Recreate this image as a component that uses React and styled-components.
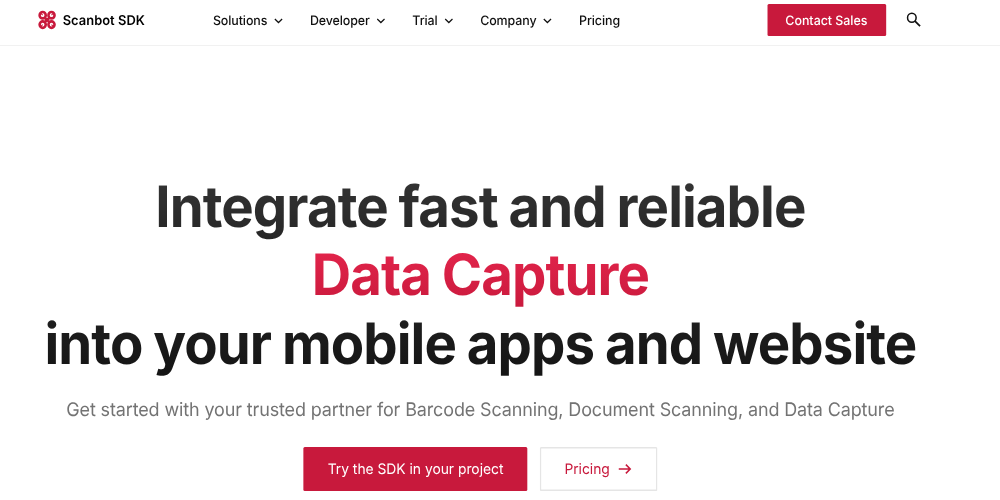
import styled, { createGlobalStyle } from 'styled-components';

const GlobalStyle = createGlobalStyle`
  * {
    box-sizing: border-box;
  }

  body {
    margin: 0;
    background: #fff;
    color: #111;
    font-family: Inter, 'Liberation Sans', sans-serif;
    text-rendering: geometricPrecision;
    overflow: hidden;
  }

  a {
    color: inherit;
    text-decoration: none;
    white-space: nowrap;
  }
`;

// slightly condensed page, everything inside is 1 / 0.957 wider
const Page = styled.div`
  width: 1045px;
  transform: scaleX(0.957);
  transform-origin: 0 0;
`;

const Header = styled.header`
  height: 46px;
  padding: 4px 0 0 39px;
  border-bottom: 1px solid #f1f1f1;
  display: flex;
  align-items: flex-start;
`;

const Brand = styled.a`
  width: 183.5px;
  height: 33px;
  display: flex;
  align-items: center;
  gap: 6.5px;
  font-size: 13.5px;
  font-weight: 600;
  letter-spacing: 0.02px;
  color: #000;

  svg {
    margin-bottom: 1px;
  }
`;

const Nav = styled.nav`
  width: 579px;
  height: 33px;
  display: flex;
  align-items: center;
  gap: 28.2px;
`;

const NavLink = styled.a`
  display: flex;
  align-items: center;
  gap: 6.3px;
  font-size: 13px;
  font-weight: 450;
  letter-spacing: -0.1px;
`;

const Button = styled.a`
  display: flex;
  align-items: center;
  justify-content: center;
  gap: 9px;
  width: ${({ $width }) => $width};
  height: ${({ $small }) => ($small ? '32px' : '44px')};
  padding-top: 1px;
  font-size: ${({ $small }) => ($small ? '13px' : '14.5px')};
  font-weight: ${({ $small }) => ($small ? 500 : 400)};
  letter-spacing: -0.03px;
  color: ${({ $outline }) => ($outline ? '#c8193c' : '#fff')};
  background: ${({ $outline }) => ($outline ? '#fff' : '#c8193c')};
  box-shadow: ${({ $outline }) => ($outline ? 'inset 0 0 0 1.5px #e5e5e5' : 'none')};
  border-radius: 1.5px;
`;

const SearchButton = styled.a`
  height: 32px;
  margin-left: 21px;
  display: flex;
  align-items: center;
`;

const Hero = styled.main`
  width: 1004px;
  padding-top: 127px;
  display: flex;
  flex-direction: column;
  align-items: center;
`;

const Title = styled.h1`
  margin: 0;
  font-size: 57px;
  font-weight: 700;
  line-height: 68.3px;
  letter-spacing: -0.017em;
  word-spacing: -1.2px;
  text-align: center;
  white-space: nowrap;
`;

const TitleLine = styled.span`
  display: block;
  color: transparent;
  background: linear-gradient(${({ $from }) => $from}, ${({ $to }) => $to});
  background-clip: text;
`;

const Lead = styled.p`
  margin: 19.1px 0 0;
  font-size: 18.8px;
  font-weight: 400;
  line-height: 26px;
  letter-spacing: -0.13px;
  color: #737373;
  white-space: nowrap;
`;

const Actions = styled.div`
  display: flex;
  gap: 13px;
  margin-top: 24px;
`;

const petals = [
  [5.6, 5.2],
  [14.8, 5.2],
  [5.6, 14.6],
  [14.8, 14.6],
];

function Logo() {
  return (
    <svg width="20" height="20" viewBox="0 0 20 20" fill="none">
      <path d="M8 8l4.4 4M12.4 8L8 12" stroke="#c8193c" strokeWidth="2.4" />
      {petals.map(([x, y]) => (
        <g key={`${x}-${y}`}>
          <circle cx={x} cy={y} r="3.2" stroke="#c8193c" strokeWidth="2.7" />
          <path
            d={`M${x} ${y}l${x < 10 ? -2 : 2} ${y < 10 ? -2 : 2}`}
            stroke="#c8193c"
            strokeWidth="1.1"
          />
        </g>
      ))}
    </svg>
  );
}

function Chevron() {
  return (
    <svg width="10" height="10" viewBox="0 0 10 10" fill="none">
      <path d="M1.2 3.1L5 6.6l3.8-3.5" stroke="#111" strokeWidth="1.3" />
    </svg>
  );
}

function SearchIcon() {
  return (
    <svg width="17" height="16" viewBox="0 0 17 16" fill="none" stroke="#111">
      <circle cx="5.8" cy="5.8" r="4.5" strokeWidth="1.6" />
      <path d="M9.1 9.1l5.3 5" strokeWidth="1.9" />
    </svg>
  );
}

function Arrow() {
  return (
    <svg width="15" height="12" viewBox="0 0 15 12" fill="none">
      <path d="M.5 6h12M8 1.6L12.5 6 8 10.4" stroke="#c8193c" strokeWidth="1.6" />
    </svg>
  );
}

const menu = ['Solutions', 'Developer', 'Trial', 'Company'];

export default function App() {
  return (
    <Page>
      <GlobalStyle />
      <Header>
        <Brand href="#">
          <Logo />
          Scanbot SDK
        </Brand>
        <Nav>
          {menu.map((label) => (
            <NavLink key={label} href="#">
              {label}
              <Chevron />
            </NavLink>
          ))}
          <NavLink href="#">Pricing</NavLink>
        </Nav>
        <Button href="#" $small $width="124px">
          Contact Sales
        </Button>
        <SearchButton href="#" aria-label="Search">
          <SearchIcon />
        </SearchButton>
      </Header>
      <Hero>
        <Title>
          <TitleLine $from="#353535" $to="#262626">
            Integrate fast and reliable
          </TitleLine>
          <TitleLine $from="#e6264d" $to="#c8193c">
            Data Capture
          </TitleLine>
          <TitleLine $from="#202020" $to="#141414">
            into your mobile apps and website
          </TitleLine>
        </Title>
        <Lead>
          Get started with your trusted partner for Barcode Scanning, Document Scanning, and Data
          Capture
        </Lead>
        <Actions>
          <Button href="#" $width="234px">
            Try the SDK in your project
          </Button>
          <Button href="#" $outline $width="122.5px">
            Pricing
            <Arrow />
          </Button>
        </Actions>
      </Hero>
    </Page>
  );
}
